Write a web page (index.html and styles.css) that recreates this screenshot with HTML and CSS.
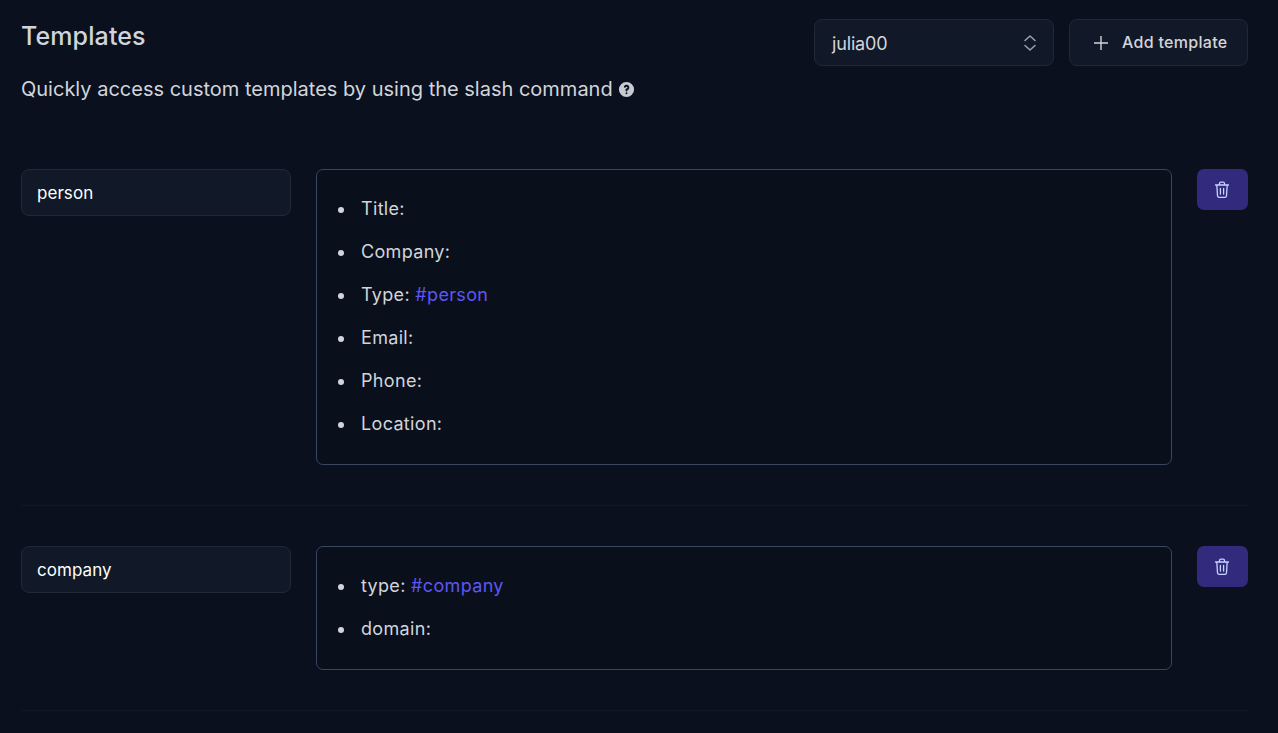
FILE: index.html
```html
<!DOCTYPE html>
<html lang="en">
<head>
<meta charset="utf-8">
<title>Templates</title>
<link rel="stylesheet" href="styles.css">
</head>
<body>
<main class="page">
  <header class="header">
    <div class="intro">
      <h1 class="title">Templates</h1>
      <p class="subtitle">Quickly access custom templates by using the slash command
        <svg class="help" viewBox="0 0 20 20" aria-hidden="true"><path fill="currentColor" fill-rule="evenodd" d="M18 10a8 8 0 1 1-16 0 8 8 0 0 1 16 0zm-8-3a1 1 0 0 0-.87.5 1 1 0 1 1-1.730-1A3 3 0 0 1 13 8a3 3 0 0 1-2 2.830V11a1 1 0 1 1-2 0v-1a1 1 0 0 1 1-1 1 1 0 1 0 0-2zm0 8a1 1 0 1 0 0-2 1 1 0 0 0 0 2z"/></svg>
      </p>
    </div>
    <div class="actions">
      <div class="select">
        <span>julia00</span>
        <svg class="chevrons" viewBox="0 0 16 20" aria-hidden="true"><path d="M3 7.500 8 3l5 4.500M3 12.500 8 17l5-4.500" fill="none" stroke="currentColor" stroke-width="1.500" stroke-linecap="round" stroke-linejoin="round"/></svg>
      </div>
      <button class="add-btn" type="button">
        <svg class="plus" viewBox="0 0 16 16" aria-hidden="true"><path d="M8 1v14M1 8h14" fill="none" stroke="currentColor" stroke-width="1.400"/></svg>
        <span class="add-label">Add template</span>
      </button>
    </div>
  </header>

  <section class="row">
    <div class="name">person</div>
    <div class="editor">
      <ul class="list">
        <li>Title:</li>
        <li>Company:</li>
        <li>Type: <span class="tag">#person</span></li>
        <li>Email:</li>
        <li>Phone:</li>
        <li>Location:</li>
      </ul>
    </div>
    <button class="delete" type="button" aria-label="Delete">
      <svg class="trash" viewBox="0 0 16 18" aria-hidden="true"><path d="M1.500 4h13M5.500 4V2.600c0-.8.6-1.400 1.400-1.400h2.200c.8 0 1.400.6 1.400 1.400V4M2.800 4l.7 10.700c.1.900.8 1.600 1.700 1.600h5.600c.9 0 1.600-.7 1.700-1.600L13.200 4M6.400 7.500v5.500M9.600 7.500v5.500" fill="none" stroke="currentColor" stroke-width="1.300" stroke-linecap="round" stroke-linejoin="round"/></svg>
    </button>
  </section>

  <section class="row">
    <div class="name">company</div>
    <div class="editor">
      <ul class="list">
        <li>type: <span class="tag">#company</span></li>
        <li>domain:</li>
      </ul>
    </div>
    <button class="delete" type="button" aria-label="Delete">
      <svg class="trash" viewBox="0 0 16 18" aria-hidden="true"><path d="M1.500 4h13M5.500 4V2.600c0-.8.6-1.400 1.400-1.400h2.200c.8 0 1.400.6 1.400 1.400V4M2.800 4l.7 10.700c.1.900.8 1.600 1.700 1.600h5.600c.9 0 1.600-.7 1.700-1.600L13.200 4M6.400 7.500v5.500M9.600 7.500v5.500" fill="none" stroke="currentColor" stroke-width="1.300" stroke-linecap="round" stroke-linejoin="round"/></svg>
    </button>
  </section>
</main>
</body>
</html>
```
FILE: styles.css
```css
* { box-sizing: border-box; }
html, body { margin: 0; height: 100%; overflow: hidden; }
body {
  background: #0a101e;
  color: #d1d5db;
  font-family: Inter, "Liberation Sans", sans-serif;
  font-size: 18px;
  line-height: 27px;
}
.page { padding: 18px 30px 0 21px; }
.header { display: flex; justify-content: space-between; align-items: flex-start; margin-bottom: 38px; }
.title { margin: 0 0 21px; font-size: 25px; line-height: 36px; font-weight: 500; letter-spacing: .12px; color: #d1d5db; }
.subtitle { margin: 0 0 28px; display: flex; align-items: center; gap: 4px; color: #d1d5db; font-size: 20px; line-height: 28px; }
.help { width: 19px; height: 19px; color: #c6cad1; }
.actions { display: flex; gap: 15px; padding-top: 1px; }
.select {
  width: 240px; height: 47px;
  display: flex; align-items: center; justify-content: space-between;
  padding: 1px 15px 0 17px;
  background: #111827; border: 1px solid #1f2937; border-radius: 8px;
  color: #d1d5db; letter-spacing: -.15px;
}
.chevrons { width: 16px; height: 20px; color: #9ca3af; }
.add-btn {
  width: 179px; height: 47px;
  display: flex; align-items: center; gap: 13px;
  padding: 0 0 0 23px;
  background: #111827; border: 1px solid #1f2937; border-radius: 8px;
  color: #d1d5db; font: 500 16px/24px Inter, "Liberation Sans", sans-serif;
  letter-spacing: .3px;
}
.add-label { margin-top: -2px; }
.plus { width: 16px; height: 16px; }
.row {
  display: flex; align-items: flex-start; gap: 25px;
  padding-bottom: 40px; margin-bottom: 40px;
  border-bottom: 1px solid #111827;
}
.name {
  flex: 0 0 270px; height: 47px;
  display: flex; align-items: center;
  padding: 2px 15px 0;
  background: #111827; border: 1px solid #1f2937; border-radius: 8px;
  color: #fff; font-size: 17px; letter-spacing: .05px;
}
.editor {
  flex: 0 0 856px;
  padding: 25px 0 27px;
  border: 1px solid #3a4560; border-radius: 7px;
  background: #0a0f1c;
}
.list { margin: 0; padding: 0 0 0 44px; list-style: none; display: flex; flex-direction: column; gap: 16px; letter-spacing: .33px; }
.list li::before {
  content: ""; display: inline-block; vertical-align: middle;
  width: 6px; height: 6px; border-radius: 50%; background: #d1d5db;
  margin: 0 17px 0 -23px;
}
.tag { color: #5e56f2; }
.delete {
  flex: 0 0 51px; height: 41px;
  display: flex; align-items: center; justify-content: center;
  padding: 0 1px 0 0; border: 0; border-radius: 7px;
  background: #312a7d; color: #c7d2fe;
}
.trash { width: 16px; height: 18px; }
```
